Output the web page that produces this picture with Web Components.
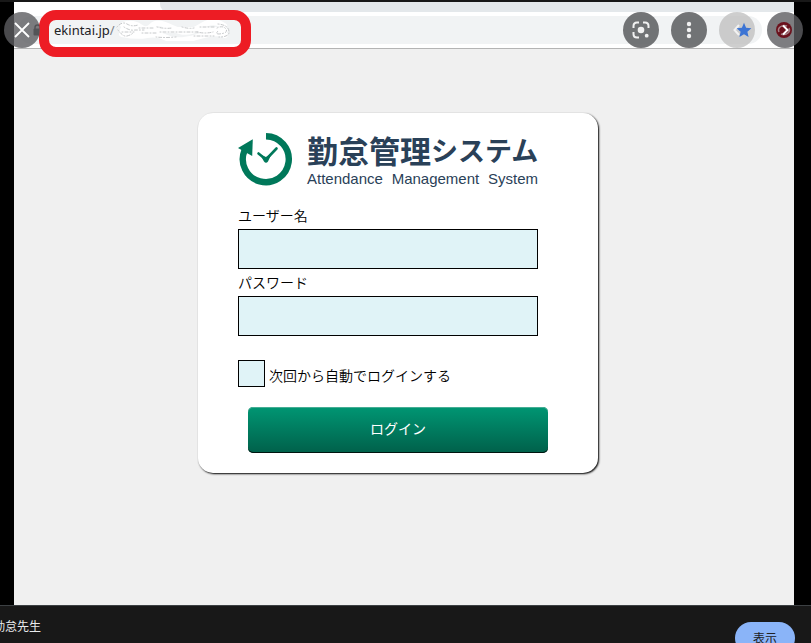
<!DOCTYPE html>
<html lang="ja">
<head>
<meta charset="utf-8">
<title>勤怠先生</title>
<style>
html, body { height: 100%; }
body { margin: 0; background: #181818; overflow: hidden; font-family: "Noto Sans", "Noto Sans CJK JP", sans-serif; }
</style>
</head>
<body>
<image-viewer>
  <viewer-toolbar slot="toolbar"></viewer-toolbar>
  <browser-frame>
    <login-card></login-card>
  </browser-frame>
  <viewer-footer slot="footer"></viewer-footer>
</image-viewer>
<script>
function define(name, html, setup) {
  customElements.define(name, class extends HTMLElement {
    constructor() {
      super();
      this.attachShadow({ mode: "open" }).innerHTML = html;
    }
    connectedCallback() { if (setup) setup(this, this.shadowRoot); }
  });
}

define("image-viewer", `
<style>
:host { display: flex; flex-direction: column; height: 100vh; position: relative; overflow: hidden; padding-top: 2px; box-sizing: border-box; }
main { flex: 1; display: flex; background: #000; padding: 0 17px 0 14px; min-height: 0; }
::slotted(browser-frame) { flex: 1; }
</style>
<main><slot></slot></main>
<slot name="footer"></slot>
<slot name="toolbar"></slot>`);

define("round-button", `
<style>
:host { display: block; }
button { display: block; width: 36px; height: 36px; border: 0; padding: 0; border-radius: 50%; background: var(--disc, rgba(92,93,96,.86)); cursor: pointer; }
::slotted(svg) { display: block; width: 36px; height: 36px; }
</style>
<button type="button"><slot></slot></button>`, (el, root) => {
  root.querySelector("button").setAttribute("aria-label", el.getAttribute("label"));
});

define("viewer-toolbar", `
<style>
:host { position: absolute; top: 12px; left: 4px; right: 8px; display: flex; gap: 12px; }
.space { flex: 1; }
.edge { --disc: rgba(92,93,96,.8); }
.pale { --disc: rgba(190,190,190,.75); }
</style>
<round-button class="edge" label="閉じる"><svg viewBox="0 0 36 36"><path d="M11 11 25 25M25 11 11 25" stroke="#fff" stroke-width="1.8"/></svg></round-button>
<span class="space"></span>
<round-button label="画像で検索"><svg viewBox="0 0 36 36" fill="none" stroke="#f1f1f1" stroke-width="2"><path d="M10.5 16v-2q0-3.500 3.500-3.500h2M20 10.500h2q3.500 0 3.500 3.500v2M10.500 20v2q0 3.500 3.500 3.500h2"/><circle cx="18" cy="18" r="3.300" fill="#f1f1f1" stroke="none"/><circle cx="23.700" cy="23.700" r="1.900" fill="#f1f1f1" stroke="none"/></svg></round-button>
<round-button label="メニュー"><svg viewBox="0 0 36 36" fill="#f1f1f1"><circle cx="18" cy="12" r="2.200"/><circle cx="18" cy="18" r="2.200"/><circle cx="18" cy="24" r="2.200"/></svg></round-button>
<round-button class="pale" label="前へ"><svg viewBox="0 0 36 36"><path d="M20 13 15.500 18 20 23" fill="none" stroke="#f2f2f2" stroke-width="2"/><path d="m25 10.800 2.100 4.900 5.300.5-4 3.500 1.200 5.200-4.600-2.700-4.600 2.700 1.200-5.200-4-3.500 5.300-.5z" fill="#3c74d4"/></svg></round-button>
<round-button class="edge" label="次へ"><svg viewBox="0 0 36 36"><circle cx="17" cy="18" r="8" fill="#6b111c"/><path d="M12 20c-2-4 3-8 8-6M22 16c2 4-3 8-8 6" fill="none" stroke="#a58287" stroke-width="1.500"/><path d="M16 13.500 20.500 18 16 22.500" fill="none" stroke="#fff" stroke-width="2"/></svg></round-button>`);

define("address-bar", `
<style>
:host { display: flex; align-items: center; height: 36px; padding: 0 32px 0 4px; background: #fff; border-bottom: 1px solid #b4b4b4; }
.pill { flex: 1; display: flex; align-items: center; height: 28px; border-radius: 14px; background: #f1f3f4; padding-left: 14px; position: relative; }
.lock { width: 12px; height: 14px; flex: none; }
.url { font-size: 13px; line-height: 28px; color: #202124; text-decoration: none; margin-left: 10px; }
.url span { color: #7d8186; }
.scrub { width: 116px; height: 22px; margin-left: 1px; flex: none; }
.mark { position: absolute; left: 21px; top: -6px; width: 192px; height: 27px; border: 10px solid #ed1c24; border-radius: 17px; pointer-events: none; }
</style>
<div class="pill">
<svg class="lock" viewBox="0 0 12 14"><path d="M3 6V4.500a2.500 2.500 0 0 1 5 0V6" fill="none" stroke="#303236" stroke-width="1.500"/><rect x="1.500" y="5.500" width="8" height="7" rx="1" fill="#303236"/></svg>
<a class="url" href="#">ekintai.jp<span>/</span></a>
<svg class="scrub" viewBox="0 0 116 22"><g fill="none" stroke-linecap="round"><path d="M7 6q10-3 17 2t12-1 20 2 28-1 24-1M7 11h102M6 15q15 3 25 1t20 3 30-1 28-2" stroke="#fff" stroke-width="6"/><path d="M1 8q5-6 10-3t11 1M2 11q5 7 9 6t6-3M8 8q6 4 11 3h9M6 13h12M23 9h16M26 14h14M41 8q8 2 15 1M44 13h22M40 18q9 1 20 0M66 8q7 2 12 1M68 13h14M81 13q8 2 16 0M84 8h14M78 17h20M102 5q10 1 11 7t-10 6M101 9q6-3 9 1t-7 5q-4 0-1-3" stroke="#c6c8ca" stroke-width="1" stroke-dasharray="1 2 3 2"/></g></svg>
<div class="mark"></div>
</div>`);

define("browser-frame", `
<style>
:host { display: flex; flex-direction: column; min-width: 0; background: #f0f0f0; }
.tabs { height: 10px; flex: none; display: flex; background: #fff; }
.tab { width: 146px; }
.strip { flex: 1; background: #e4e8eb; border-bottom-left-radius: 8px; }
.page { flex: 1; min-height: 0; display: flex; justify-content: center; align-items: flex-start; padding: 64px 12px 0 0; }
</style>
<div class="tabs"><span class="tab"></span><span class="strip"></span></div>
<address-bar></address-bar>
<div class="page"><slot></slot></div>`);

define("product-logo", `
<style>
:host { display: flex; justify-content: space-between; height: 52px; color: #2a4158; }
svg { width: 56px; height: 54px; flex: none; }
.words { width: 231px; }
.name { margin: 0; display: flex; align-items: center; height: 34px; font: bold 31px/34px "Noto Sans CJK JP", sans-serif; white-space: nowrap; }
.kana { font-size: 27px; }
.sub { margin: 4px 0 0; font: 15px/16px "Liberation Sans", Arial, sans-serif; display: flex; justify-content: space-between; }
</style>
<svg viewBox="0 0 56 54" aria-hidden="true"><path d="M28 3.200A23 23 0 1 1 6.500 17.500" fill="none" stroke="#00785a" stroke-width="6.400"/><path d="M0 15 14.800 6.200 14.200 23z" fill="#00785a"/><path d="M20.500 20.500 28 26.500 38.500 15.500" fill="none" stroke="#00785a" stroke-width="2.600" stroke-linecap="round"/><path d="M22 21.500 28 24 34 20 30 28.500Q28 31 26 28.500z" fill="#00785a"/></svg>
<div class="words"><h1 class="name"><span>勤怠管理</span><span class="kana">システム</span></h1>
<p class="sub"><span>Attendance</span> <span>Management</span> <span>System</span></p></div>`);

define("text-field", `
<style>
:host { display: block; }
label { display: block; font-size: 14px; line-height: 27px; }
input { display: block; box-sizing: border-box; width: 100%; height: 40px; margin: 0; padding: 0 8px; border: 1px solid #000; border-radius: 0; background: #e0f3f7; font: 16px "Noto Sans CJK JP", sans-serif; }
</style>
<label for="f"><slot></slot></label><input id="f">`, (el, root) => {
  root.querySelector("input").type = el.getAttribute("type") || "text";
});

define("check-field", `
<style>
:host { display: flex; align-items: flex-end; gap: 4px; }
input { appearance: none; box-sizing: border-box; width: 27px; height: 27px; margin: 0; border: 1px solid #000; background: #e0f3f7; flex: none; }
input:checked { background: #00785a; }
label { font-size: 14px; line-height: 24px; }
</style>
<input type="checkbox" id="c"><label for="c"><slot></slot></label>`);

define("login-card", `
<style>
:host { display: block; box-sizing: border-box; width: 400px; max-width: 100%; padding: 20px 60px 20px 40px; border-radius: 15px; background: #fff; box-shadow: 1px 1px 2px #000; color: #000; font-family: "Noto Sans CJK JP", sans-serif; font-weight: 350; }
form { margin-top: 17px; }
check-field { margin-top: 24px; }
button { display: block; width: 100%; height: 46px; margin: 20px 0 0 10px; padding: 0 0 4px; border: 0; border-radius: 5px; color: #fff; font: 400 14px "Noto Sans CJK JP", sans-serif; background: linear-gradient(#009673, #00604a); box-shadow: inset 0 1px #45ad94, inset 0 -1px #00150f; cursor: pointer; }
</style>
<product-logo></product-logo>
<form>
<text-field>ユーザー名</text-field>
<text-field type="password">パスワード</text-field>
<check-field>次回から自動でログインする</check-field>
<button type="button">ログイン</button>
</form>`);

define("viewer-footer", `
<style>
:host { display: flex; justify-content: space-between; flex: none; box-sizing: border-box; height: 38px; border-top: 1px solid #3c4043; background: #181818; color: #e8eaed; padding-right: 16px; font-family: "Noto Sans CJK JP", sans-serif; overflow: hidden; }
.title { width: 41px; display: flex; justify-content: flex-end; font-size: 12px; line-height: 40px; white-space: nowrap; }
button { width: 60px; height: 32px; flex: none; margin-top: 16px; padding: 0; border: 0; border-radius: 16px; background: #8ab4f8; color: #202124; font: 12px/32px "Noto Sans CJK JP", sans-serif; }
</style>
<span class="title">勤怠先生</span>
<button type="button">表示</button>`);
</script>
</body>
</html>
